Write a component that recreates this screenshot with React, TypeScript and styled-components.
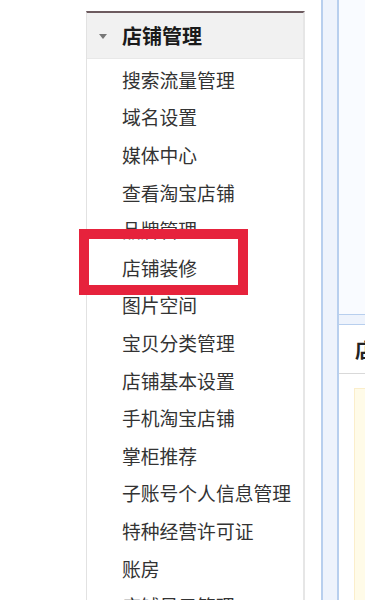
import React from "react";
import styled, { createGlobalStyle } from "styled-components";

const Global = createGlobalStyle`
  html, body { margin: 0; padding: 0; height: 100%; background: #fff; overflow: hidden; }
  #root { height: 100%; }
  * { box-sizing: border-box; }
`;

const Page = styled.div`
  display: flex;
  height: 600px;
  padding-left: 86px;
  font-family: "Noto Sans CJK SC", "Noto Sans", sans-serif;
`;

const Sidebar = styled.div`
  width: 219px;
  margin-top: 11px;
  border-top: 2px solid #6d5b5f;
  border-left: 1px solid #e2e2e2;
  border-right: 2px solid #e6e6e6;
  flex-shrink: 0;
`;

const Header = styled.div`
  height: 46px;
  background: #f1f1f1;
  border-bottom: 1px solid #e8e8e8;
  display: flex;
  align-items: center;
  padding-left: 12px;
  gap: 15px;
`;

const Caret = styled.span`
  width: 0;
  height: 0;
  border-left: 4px solid transparent;
  border-right: 4px solid transparent;
  border-top: 5px solid #777;
  margin-top: 1px;
`;

const HeaderTitle = styled.span`
  font-size: 20px;
  font-weight: 700;
  color: #1a1a1a;
  letter-spacing: 0px;
`;

const List = styled.ul`
  list-style: none;
  margin: 0;
  padding: 1.5px 0 0 0;
`;

const Item = styled.li`
  position: relative;
  height: 37.6px;
  display: flex;
  align-items: center;
  padding-left: 35px;
  font-size: 18.8px;
  color: #333;
  white-space: nowrap;
`;

const Highlight = styled.div`
  position: absolute;
  left: -8px;
  top: -19px;
  width: 169px;
  height: 66px;
  border: 10px solid #e6223c;
  pointer-events: none;
`;

const Gap = styled.div`
  width: 16px;
  flex-shrink: 0;
`;

const Strip = styled.div`
  width: 18px;
  flex-shrink: 0;
  background: #eef3fc;
  border-left: 2px solid #b8cfee;
  border-right: 2px solid #b8cfee;
`;

const Main = styled.div`
  flex: 1;
  display: flex;
  flex-direction: column;
  background: #eef3fc;
  gap: 9px;
  overflow: hidden;
`;

const TopBox = styled.div`
  height: 315px;
  background: #f9fbff;
  border-bottom: 1px solid #b8cfee;
`;

const Box = styled.div`
  flex: 1;
  background: #fff;
  border-top: 1px solid #b8cfee;
  display: flex;
  flex-direction: column;
`;

const BoxHeader = styled.div`
  height: 49px;
  border-bottom: 1px solid #d9d9d9;
  display: flex;
  align-items: center;
  padding-left: 16px;
  font-size: 20px;
  font-weight: 700;
  color: #222;
  white-space: nowrap;
`;

const BoxBody = styled.div`
  flex: 1;
  padding: 14px 0 0 15px;
`;

const Notice = styled.div`
  height: 100%;
  background: #fffbe8;
  border-left: 1px solid #fbeecb;
  border-top: 1px solid #fbeecb;
`;

const items = [
  "搜索流量管理",
  "域名设置",
  "媒体中心",
  "查看淘宝店铺",
  "品牌管理",
  "店铺装修",
  "图片空间",
  "宝贝分类管理",
  "店铺基本设置",
  "手机淘宝店铺",
  "掌柜推荐",
  "子账号个人信息管理",
  "特种经营许可证",
  "账房",
  "店铺显示管理",
];

export default function App() {
  return (
    <>
      <Global />
      <Page>
        <Sidebar>
          <Header>
            <Caret />
            <HeaderTitle>店铺管理</HeaderTitle>
          </Header>
          <List>
            {items.map((t) => (
              <Item key={t}>
                {t}
                {t === "店铺装修" && <Highlight />}
              </Item>
            ))}
          </List>
        </Sidebar>
        <Gap />
        <Strip />
        <Main>
          <TopBox />
          <Box>
            <BoxHeader>店铺</BoxHeader>
            <BoxBody>
              <Notice />
            </BoxBody>
          </Box>
        </Main>
      </Page>
    </>
  );
}
